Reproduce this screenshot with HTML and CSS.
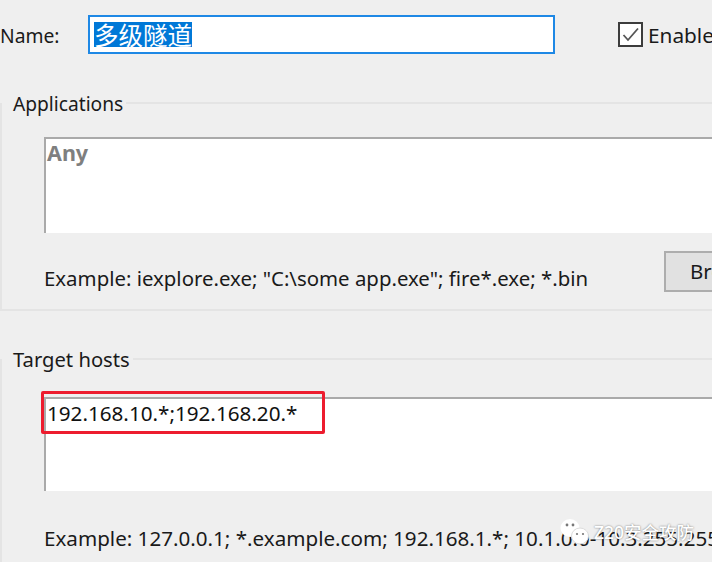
FILE: index.html
```html
<!DOCTYPE html>
<html lang="en">
<head>
<meta charset="utf-8">
<title>Proxification rule</title>
<link rel="stylesheet" href="styles.css">
</head>
<body>
<main class="window">
  <div class="name-row">
    <span class="name-label">Name:</span>
    <div class="name-input"><span class="selected">多级隧道</span></div>
    <div class="enabled">
      <svg class="checkbox" viewBox="0 0 25 25" aria-hidden="true">
        <rect x="1" y="1" width="23" height="23" fill="#fff" stroke="#3c3c3c" stroke-width="2"/>
        <path d="M5.5 13 L10 18 L20 6.5" fill="none" stroke="#555" stroke-width="1.8"/>
      </svg>
      <span>Enabled</span>
    </div>
  </div>

  <section class="group group-apps">
    <div class="group-title title-apps"><span>Applications</span></div>
    <div class="field field-apps"><span class="any">Any</span></div>
    <div class="example-row">
      <span class="example">Example: iexplore.exe; "C:\some app.exe"; fire*.exe; *.bin</span>
      <div class="browse">Browse...</div>
    </div>
  </section>

  <section class="group group-hosts">
    <div class="group-title title-hosts"><span>Target hosts</span></div>
    <div class="field field-hosts">
      <span class="hosts">192.168.10.*;192.168.20.*</span>
      <div class="highlight"></div>
    </div>
    <div class="example-row example-hosts">
      <span class="example">Example: 127.0.0.1; *.example.com; 192.168.1.*; 10.1.0.0-10.3.255.255</span>
    </div>
  </section>

  <div class="watermark">
    <svg class="wechat" viewBox="0 0 32 28" aria-hidden="true">
      <ellipse cx="10" cy="10" rx="9.5" ry="9" fill="#fff"/>
      <ellipse cx="20" cy="18" rx="8.5" ry="8" fill="#fff" stroke="#dcdcdc" stroke-width="1"/>
      <circle cx="7" cy="7" r="1.4" fill="#777"/>
      <circle cx="13" cy="7" r="1.4" fill="#777"/>
      <circle cx="17" cy="16" r="1.1" fill="#777"/>
      <circle cx="23" cy="16" r="1.1" fill="#777"/>
    </svg>
    <span class="mark-text">Z20安全攻防</span>
  </div>
</main>
</body>
</html>
```
FILE: styles.css
```css
html, body {
  margin: 0;
  padding: 0;
  background: #fff;
}

.window {
  position: relative;
  width: 712px;
  height: 562px;
  overflow: hidden;
  background: #efefef;
  color: #1a1a1a;
  font-family: "Noto Sans", "Noto Sans CJK SC", sans-serif;
  font-size: 20.4px;
}

.name-row {
  display: flex;
  align-items: center;
  height: 39px;
  padding-top: 15px;
}

.name-label {
  width: 88px;
  flex: none;
  font-size: 19.3px;
  position: relative;
  top: 1px;
}

.name-input {
  box-sizing: border-box;
  width: 467px;
  height: 39px;
  flex: none;
  padding: 3px 4px;
  background: #fff;
  border: 2px solid #1e88e5;
  display: flex;
  align-items: center;
}

.selected {
  background: #0078d7;
  color: #fff;
  font-family: "Noto Sans CJK SC", sans-serif;
  font-size: 24.5px;
  line-height: 25px;
  height: 25px;
}

.enabled {
  display: flex;
  align-items: center;
  gap: 5px;
  margin-left: 63px;
  flex: none;
  font-size: 20.8px;
  white-space: nowrap;
}

.checkbox {
  width: 25px;
  height: 25px;
  flex: none;
}

.group {
  display: flow-root;
  box-sizing: border-box;
  border-left: 2px solid #e4e4e4;
  border-bottom: 2px solid #e4e4e4;
}

.group-apps {
  height: 208px;
  margin-top: 49px;
}

.group-hosts {
  height: 203px;
  margin-top: 48px;
  border-bottom: 0;
}

.group-title {
  display: flex;
  align-items: center;
  height: 28px;
  margin-top: -14px;
  padding-left: 11px;
  white-space: nowrap;
}

.title-apps {
  font-size: 19.2px;
}

.title-hosts {
  font-size: 20.2px;
}

.group-title::after {
  content: "";
  flex: 1;
  height: 2px;
  margin-left: 3px;
  background: #e4e4e4;
}

.field {
  position: relative;
  box-sizing: border-box;
  margin-left: 42px;
  background: #fff;
  border-top: 2px solid #aaa;
  border-left: 2px solid #aaa;
}

.field-apps {
  height: 96px;
  margin-top: 20px;
}

.field-hosts {
  height: 94px;
  margin-top: 24px;
}

.any {
  display: block;
  padding: 1px 0 0 1px;
  font-size: 21.5px;
  font-weight: 700;
  color: #7f7f7f;
  line-height: 26px;
}

.hosts {
  display: block;
  padding: 1px 0 0 1px;
  font-size: 20.65px;
  line-height: 26px;
  color: #111;
}

.highlight {
  position: absolute;
  left: -5px;
  top: -8px;
  box-sizing: border-box;
  width: 284px;
  height: 43px;
  border: 3px solid #ed1c2e;
  border-radius: 2px;
}

.example-row {
  display: flex;
  align-items: flex-end;
  justify-content: space-between;
  height: 41px;
  margin-top: 18px;
  margin-left: 42px;
  line-height: 27px;
  white-space: nowrap;
}

.example-hosts {
  height: 27px;
  margin-top: 34px;
  font-size: 20.6px;
}

.browse {
  box-sizing: border-box;
  width: 110px;
  height: 41px;
  flex: none;
  margin-right: -62px;
  padding-left: 24px;
  background: #e1e1e1;
  border: 2px solid #adadad;
  line-height: 37px;
}

.watermark {
  position: absolute;
  left: 560px;
  top: 518px;
  display: flex;
  align-items: center;
  gap: 2px;
  color: #fff;
  font-size: 17.5px;
  font-weight: 500;
  line-height: 22px;
  white-space: nowrap;
}

.mark-text {
  margin-top: -1px;
  text-shadow: 0 0 2px rgba(0, 0, 0, .55);
}

.wechat {
  width: 32px;
  height: 28px;
  flex: none;
}
```
